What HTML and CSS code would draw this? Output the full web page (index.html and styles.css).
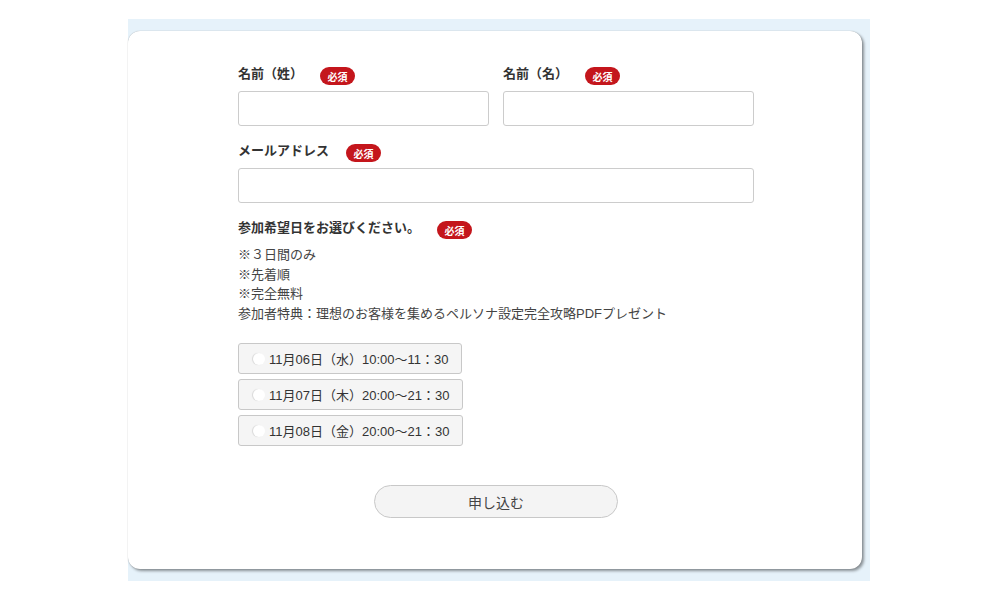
FILE: index.html
```html
<!DOCTYPE html>
<html lang="ja">
<head>
<meta charset="utf-8">
<title>お申し込みフォーム</title>
<link rel="stylesheet" href="styles.css">
</head>
<body>
<div class="frame">
  <div class="card">
    <form class="form">
      <div class="row two">
        <div class="field">
          <div class="label"><span class="label-text">名前（姓）</span><span class="req">必須</span></div>
          <input class="input" type="text">
        </div>
        <div class="field">
          <div class="label"><span class="label-text">名前（名）</span><span class="req">必須</span></div>
          <input class="input" type="text">
        </div>
      </div>
      <div class="row">
        <div class="field">
          <div class="label"><span class="label-text">メールアドレス</span><span class="req">必須</span></div>
          <input class="input" type="text">
        </div>
      </div>
      <div class="row">
        <div class="label"><span class="label-text">参加希望日をお選びください。</span><span class="req">必須</span></div>
        <div class="notes">
          <p>※３日間のみ</p>
          <p>※先着順</p>
          <p>※完全無料</p>
          <p>参加者特典：理想のお客様を集めるペルソナ設定完全攻略PDFプレゼント</p>
        </div>
        <div class="choices">
          <label class="choice"><span class="radio"></span>11月06日（水）10:00〜11：30</label>
          <label class="choice"><span class="radio"></span>11月07日（木）20:00〜21：30</label>
          <label class="choice"><span class="radio"></span>11月08日（金）20:00〜21：30</label>
        </div>
      </div>
      <div class="submit-row">
        <button class="submit" type="button">申し込む</button>
      </div>
    </form>
  </div>
</div>
</body>
</html>
```
FILE: styles.css
```css
html, body {
  margin: 0;
  padding: 0;
  background: #ffffff;
}
body {
  font-family: "Liberation Sans", "Noto Sans CJK JP", sans-serif;
  color: #333333;
  width: 1000px;
  height: 600px;
  overflow: hidden;
}
.frame {
  margin: 19px 0 0 128px;
  width: 742px;
  height: 562px;
  background: #e6f2fa;
  padding-top: 12px;
  box-sizing: border-box;
}
.card {
  width: 734px;
  height: 538px;
  background: #ffffff;
  border-radius: 12px;
  box-shadow: 0 0 1px rgba(0,0,0,0.35), 2px 2px 3px rgba(0,0,0,0.4);
  box-sizing: border-box;
  padding: 36px 0 0 110px;
}
.form {
  width: 516px;
}
.row {
  margin-bottom: 18px;
}
.row.two {
  display: flex;
  gap: 14px;
}
.row.two .field {
  flex: 1;
}
.label {
  display: flex;
  align-items: flex-start;
  height: 18px;
  font-size: 13px;
  font-weight: bold;
  color: #333333;
  margin-bottom: 6px;
}
.label-text {
  line-height: 14px;
}
.req {
  display: inline-flex;
  align-items: center;
  justify-content: center;
  margin-left: 17px;
  width: 35px;
  height: 18px;
  border-radius: 9px;
  background: #c4161c;
  color: #ffffff;
  font-size: 10px;
  font-weight: bold;
}
.input {
  display: block;
  width: 100%;
  height: 35px;
  box-sizing: border-box;
  border: 1px solid #cccccc;
  border-radius: 3px;
  background: #ffffff;
  margin: 0;
}
.notes {
  margin-top: 0;
  font-size: 13px;
  color: #444444;
  line-height: 19.5px;
}
.notes p {
  margin: 0;
}
.choices {
  margin-top: 20px;
  display: flex;
  flex-direction: column;
  align-items: flex-start;
  gap: 5px;
}
.choice {
  display: inline-flex;
  align-items: center;
  height: 31px;
  box-sizing: border-box;
  padding: 0 13px 0 14px;
  border: 1px solid #c8c8c8;
  border-radius: 3px;
  background: #f5f5f5;
  font-size: 13px;
  color: #333333;
}
.radio {
  width: 12px;
  height: 12px;
  border-radius: 50%;
  background: #ffffff;
  box-shadow: -1px 0 1px rgba(0,0,0,0.12);
  margin-right: 4px;
}
.submit-row {
  display: flex;
  justify-content: center;
  margin-top: 39px;
}
.submit {
  width: 244px;
  height: 33px;
  border: 1px solid #c8c8c8;
  border-radius: 17px;
  background: #f4f4f4;
  font-family: "Liberation Sans", "Noto Sans CJK JP", sans-serif;
  font-size: 14px;
  color: #444444;
  padding: 0;
}
```
